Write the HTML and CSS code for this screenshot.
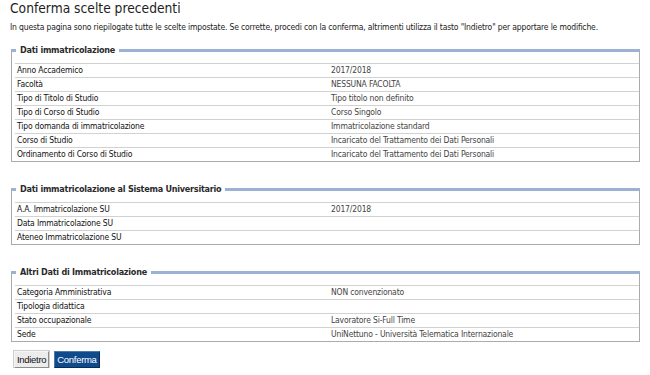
FILE: index.html
```html
<!DOCTYPE html>
<html lang="it">
<head>
<meta charset="utf-8">
<title>Conferma scelte precedenti</title>
<link rel="stylesheet" href="styles.css">
</head>
<body>
<h1 class="title">Conferma scelte precedenti</h1>
<p class="intro">In questa pagina sono riepilogate tutte le scelte impostate. Se corrette, procedi con la conferma, altrimenti utilizza il tasto "Indietro" per apportare le modifiche.</p>

<fieldset class="box">
  <legend class="box-title">Dati immatricolazione</legend>
  <table class="detail">
    <tr><th>Anno Accademico</th><td>2017/2018</td></tr>
    <tr><th>Facoltà</th><td>NESSUNA FACOLTA</td></tr>
    <tr><th>Tipo di Titolo di Studio</th><td>Tipo titolo non definito</td></tr>
    <tr><th>Tipo di Corso di Studio</th><td>Corso Singolo</td></tr>
    <tr><th>Tipo domanda di immatricolazione</th><td>Immatricolazione standard</td></tr>
    <tr><th>Corso di Studio</th><td>Incaricato del Trattamento dei Dati Personali</td></tr>
    <tr><th>Ordinamento di Corso di Studio</th><td>Incaricato del Trattamento dei Dati Personali</td></tr>
  </table>
</fieldset>

<fieldset class="box">
  <legend class="box-title">Dati immatricolazione al Sistema Universitario</legend>
  <table class="detail">
    <tr><th>A.A. Immatricolazione SU</th><td>2017/2018</td></tr>
    <tr><th>Data Immatricolazione SU</th><td></td></tr>
    <tr><th>Ateneo Immatricolazione SU</th><td></td></tr>
  </table>
</fieldset>

<fieldset class="box">
  <legend class="box-title">Altri Dati di Immatricolazione</legend>
  <table class="detail">
    <tr><th>Categoria Amministrativa</th><td>NON convenzionato</td></tr>
    <tr><th>Tipologia didattica</th><td></td></tr>
    <tr><th>Stato occupazionale</th><td>Lavoratore Si-Full Time</td></tr>
    <tr><th>Sede</th><td>UniNettuno - Università Telematica Internazionale</td></tr>
  </table>
</fieldset>

<div class="actions">
  <button class="btn btn-back" type="button">Indietro</button>
  <button class="btn btn-confirm" type="button">Conferma</button>
</div>
</body>
</html>
```

FILE: styles.css
```css
html, body {
  background: #ffffff;
}
body {
  margin: 0;
  padding: 0 10px;
  font-family: "DejaVu Sans Condensed", "DejaVu Sans", sans-serif;
  font-size: 8.5px;
  letter-spacing: -0.16px;
  color: #333333;
}
.title {
  margin: 0;
  font-size: 13.7px;
  font-weight: normal;
  line-height: 16px;
  letter-spacing: 0;
  color: #1e1e1e;
}
.intro {
  margin: 5px 0 0 0;
  line-height: 12px;
  color: #222222;
}
.box {
  margin: 10px 0 0 1px;
  padding: 6px 0 0 3px;
  border: 1px solid #ababab;
  border-top: 3px solid #9cb2d5;
  min-width: 0;
}
.box + .box {
  margin-top: 20px;
}
.box-title {
  margin-left: 1px;
  padding: 0 4px;
  font-weight: bold;
  font-size: 9px;
  line-height: 14px;
  letter-spacing: -0.25px;
  color: #2a2a2a;
}
.detail {
  width: 100%;
  border-collapse: separate;
  border-spacing: 0;
}
.detail th,
.detail td {
  border-top: 1px solid #d2d2d2;
  padding: 0 0 0 2px;
  height: 13px;
  line-height: 13px;
  text-align: left;
  vertical-align: middle;
  font-size: 8.5px;
  white-space: nowrap;
}
.detail th {
  width: 312px;
  font-weight: normal;
  color: #111111;
}
.detail td {
  color: #444444;
}
.actions {
  display: flex;
  gap: 5px;
  margin: 9px 0 0 4px;
}
.btn {
  font-family: "Liberation Sans", Arial, sans-serif;
  font-size: 9.5px;
  letter-spacing: -0.3px;
  line-height: 13px;
  height: 17px;
  padding: 1px 2px;
  border: 1px solid;
  cursor: pointer;
}
.btn-back {
  background: #ececec;
  color: #111111;
  border-color: #f6f6f6 #8c8c8c #8c8c8c #f6f6f6;
  outline: 1px solid #cfcfcf;
}
.btn-confirm {
  background: #0f4a8c;
  color: #ffffff;
  border-color: #4f78ad #082c56 #082c56 #4f78ad;
}
```
